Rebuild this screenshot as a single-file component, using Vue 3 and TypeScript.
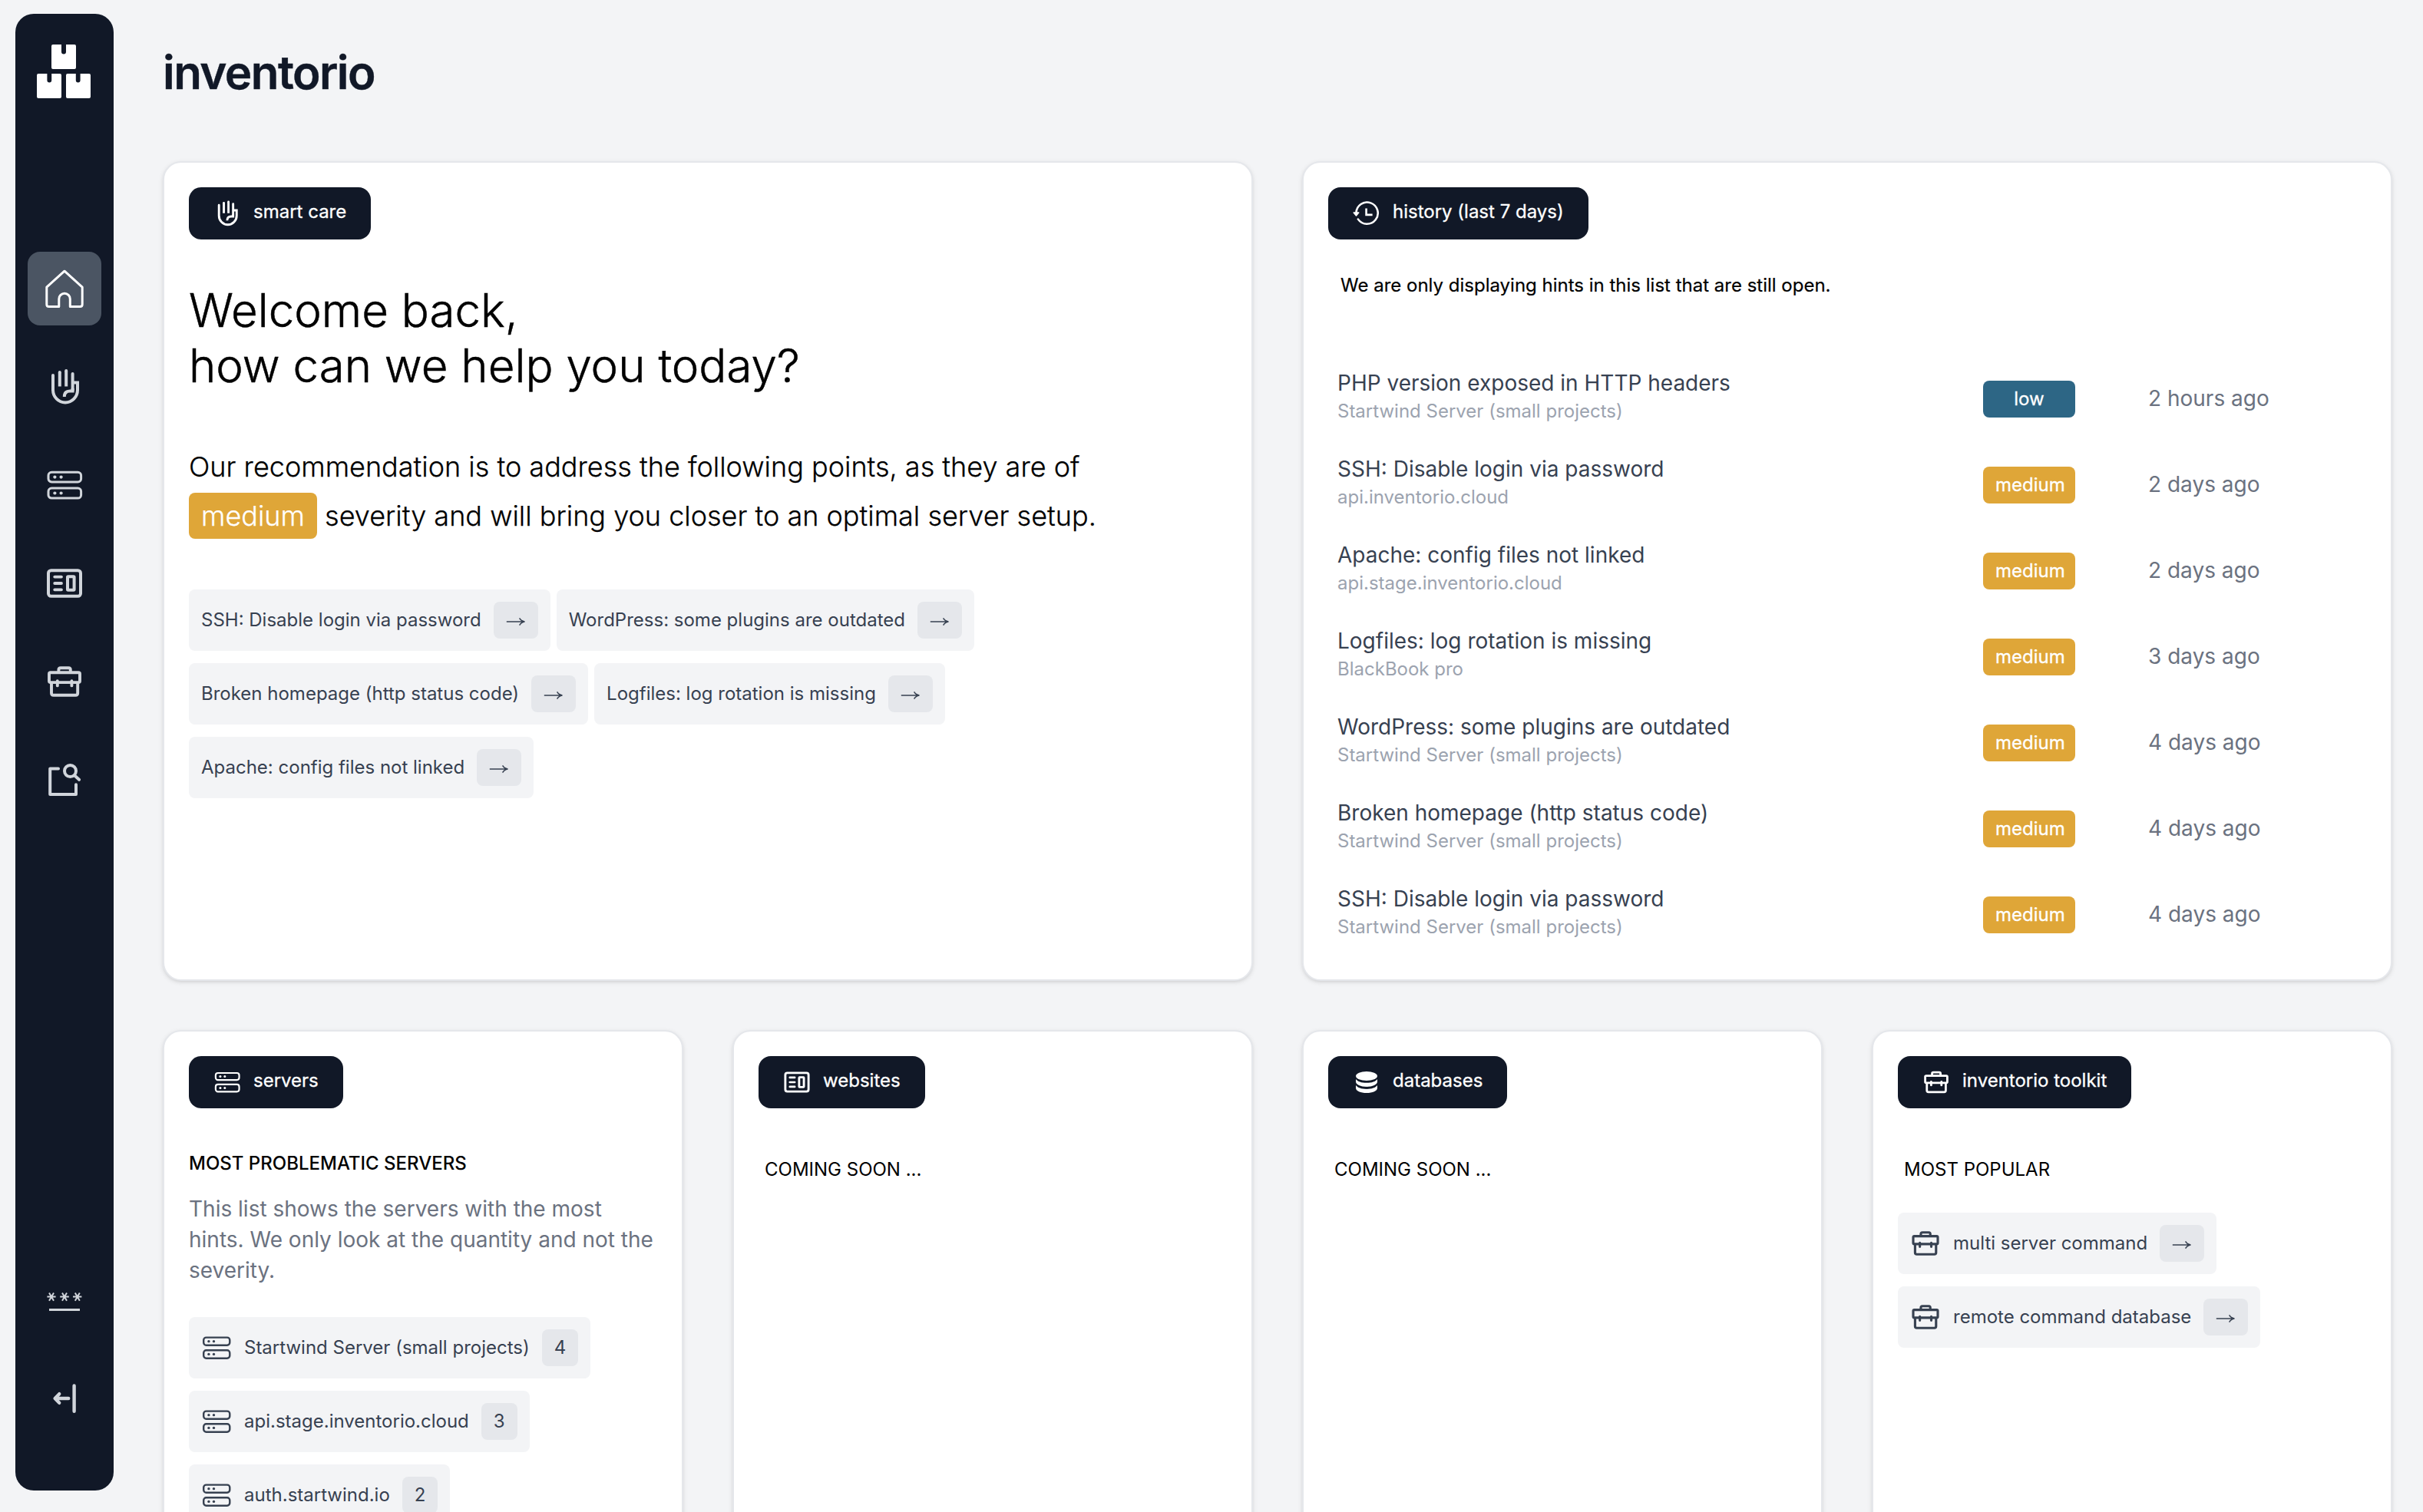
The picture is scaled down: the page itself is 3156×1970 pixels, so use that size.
<script setup lang="ts">
import { defineComponent, h } from 'vue'

type IconName = 'home' | 'hand' | 'server' | 'website' | 'toolbox' | 'report' | 'password' | 'logout' | 'history' | 'database'

// Inner markup of every icon, drawn on a 50 x 50 grid
const shapes: Record<IconName, string> = {
  home: '<path stroke-width="3" stroke-linejoin="round" d="M1.8 23.2 25 2.2 48.2 23.2V45.5Q48.2 48.5 45.2 48.5H32.3V38.5A7.2 7.2 0 0 0 17.8 38.5V48.5H4.8Q1.8 48.5 1.8 45.5Z"/>',
  hand: '<path stroke-width="4" stroke-linecap="round" d="M10 10V29A16 16.5 0 0 0 42 29V19.5H37"/><path stroke-width="4" stroke-linecap="round" d="M35.6 8V29.2"/><path stroke-width="4" stroke-linejoin="miter" d="M35.6 27V30.5H32C27.5 30.5 24.8 33 24.8 38"/><path stroke-width="4" d="M18.8 24.5V6M27.2 24.5V4"/><circle cx="18.8" cy="6" r="2" fill="currentColor" stroke="none"/><circle cx="27.2" cy="4" r="2" fill="currentColor" stroke="none"/>',
  server: '<rect x="4" y="8.3" width="42.6" height="12.6" rx="4.2" stroke-width="3"/><rect x="4" y="29.1" width="42.6" height="13" rx="4.2" stroke-width="3"/><g fill="currentColor" stroke="none"><circle cx="12.4" cy="14.6" r="2.1"/><circle cx="20.6" cy="14.6" r="2.1"/><circle cx="12.4" cy="35.5" r="2.1"/><circle cx="20.6" cy="35.5" r="2.1"/></g>',
  website: '<rect x="4" y="8.2" width="42" height="33.6" rx="3.6" stroke-width="4"/><path stroke-width="3.8" stroke-linecap="round" d="M12.2 16.6H21M12.2 25H21M12.2 33.3H21"/><rect x="29" y="16.2" width="8.6" height="17.6" rx="0.8" stroke-width="4"/>',
  toolbox: '<g stroke-width="3.9" stroke-linecap="round"><rect x="5" y="13.3" width="40" height="12.8" rx="1.8"/><path d="M8 27V40Q8 42.8 10.8 42.8H39.4Q42.2 42.8 42.2 40V27M17.4 12.6V9.8Q17.4 7.2 20 7.2H30.4Q32.8 7.2 32.8 9.8V12.6M15.8 24.2V30.4M34.4 24.2V30.4"/></g>',
  report: '<g stroke-width="4" stroke-linecap="round" stroke-linejoin="round"><path d="M17 10.4H6.2V44.1H40V31.2"/><circle cx="32.5" cy="13.5" r="7.5"/><path d="M38.3 19.6 44 24.8"/></g>',
  password: '<path stroke-width="2" d="M2.4 20.6H13.6M5 15.4 11 25.8M11 15.4 5 25.8M19.2 20.6H30.8M22 15.4 28 25.8M28 15.4 22 25.8M36 20.6H47.4M38.8 15.4 44.8 25.8M44.8 15.4 38.8 25.8"/><path stroke-width="2.8" d="M5 37.5H45"/>',
  logout: '<g stroke-width="4.4" stroke-linecap="round" stroke-linejoin="round"><path d="M37.6 8.4V41.8M30.2 25H13.2M18.2 19.2 12.6 25 18.2 30.8"/></g>',
  history: '<path stroke-width="3.6" stroke-linecap="round" d="M6.2 24A19.6 19.6 0 1 1 9.6 35.6"/><path fill="currentColor" stroke="currentColor" stroke-linejoin="round" stroke-width="2" d="M1.6 23.6H10.8L6.2 29.2Z"/><path stroke-width="3.6" d="M24.4 15.8V27.6H35.6"/>',
  database: '<g fill="currentColor" stroke="none"><ellipse cx="25" cy="13.8" rx="19.4" ry="8.4"/><path d="M5.6 19.4C8.4 23.6 15.6 26.2 25 26.2S41.6 23.6 44.4 19.4V24.2C44.4 29 36 33.2 25 33.2S5.6 29 5.6 24.2Z"/><path d="M5.6 30.6C8.4 34.8 15.6 37.4 25 37.4S41.6 34.8 44.4 30.6V35.6C44.4 40.4 36 44.4 25 44.4S5.6 40.4 5.6 35.6Z"/></g>',
}

const UiIcon = defineComponent({
  props: { name: { type: String, required: true }, size: { type: Number, required: true } },
  setup(props) {
    return () =>
      h('svg', {
        width: props.size,
        height: props.size,
        viewBox: '0 0 50 50',
        fill: 'none',
        stroke: 'currentColor',
        innerHTML: shapes[props.name as IconName],
      })
  },
})

const ArrowIcon = defineComponent({
  setup() {
    return () =>
      h('svg', {
        width: 26,
        height: 12,
        viewBox: '0 0 26 12',
        fill: 'none',
        stroke: 'currentColor',
        'stroke-width': 1.5,
        innerHTML: '<path d="M0.8 6H24M17.6 1.4C18.8 3.6 21 5.3 24.4 6C21 6.7 18.8 8.4 17.6 10.6"/>',
      })
  },
})

const nav: { icon: IconName; active?: boolean }[] = [
  { icon: 'home', active: true },
  { icon: 'hand' },
  { icon: 'server' },
  { icon: 'website' },
  { icon: 'toolbox' },
  { icon: 'report' },
]

const recommendations: string[][] = [
  ['SSH: Disable login via password', 'WordPress: some plugins are outdated'],
  ['Broken homepage (http status code)', 'Logfiles: log rotation is missing'],
  ['Apache: config files not linked'],
]

interface Hint { title: string; source: string; severity: 'low' | 'medium'; time: string }
const hints: Hint[] = [
  { title: 'PHP version exposed in HTTP headers', source: 'Startwind Server (small projects)', severity: 'low', time: '2 hours ago' },
  { title: 'SSH: Disable login via password', source: 'api.inventorio.cloud', severity: 'medium', time: '2 days ago' },
  { title: 'Apache: config files not linked', source: 'api.stage.inventorio.cloud', severity: 'medium', time: '2 days ago' },
  { title: 'Logfiles: log rotation is missing', source: 'BlackBook pro', severity: 'medium', time: '3 days ago' },
  { title: 'WordPress: some plugins are outdated', source: 'Startwind Server (small projects)', severity: 'medium', time: '4 days ago' },
  { title: 'Broken homepage (http status code)', source: 'Startwind Server (small projects)', severity: 'medium', time: '4 days ago' },
  { title: 'SSH: Disable login via password', source: 'Startwind Server (small projects)', severity: 'medium', time: '4 days ago' },
]

const servers = [
  { name: 'Startwind Server (small projects)', count: 4 },
  { name: 'api.stage.inventorio.cloud', count: 3 },
  { name: 'auth.startwind.io', count: 2 },
]

const tools = ['multi server command', 'remote command database']
</script>

<template>
  <div class="page">
    <aside class="sidebar">
      <svg class="logo" width="70" height="70" viewBox="0 0 70 70" fill="#fff">
        <path d="M21 0H32V9.4A3 3 0 0 0 38 9.4V0H49Q51 0 51 2V30Q51 32 49 32H21Q19 32 19 30V2Q19 0 21 0Z" />
        <path d="M2 38H13.4V46.6A2.9 2.9 0 0 0 19.2 46.6V38H30Q32 38 32 40V68Q32 70 30 70H2Q0 70 0 68V40Q0 38 2 38Z" />
        <path d="M40 38H50.8V46.6A2.9 2.9 0 0 0 56.6 46.6V38H68Q70 38 70 40V68Q70 70 68 70H40Q38 70 38 68V40Q38 38 40 38Z" />
      </svg>
      <nav class="nav">
        <a v-for="item in nav" :key="item.icon" class="nav-item" :class="{ active: item.active }">
          <UiIcon :name="item.icon" :size="50" />
        </a>
      </nav>
      <nav class="nav nav-bottom">
        <a class="nav-item"><UiIcon name="password" :size="50" /></a>
        <a class="nav-item"><UiIcon name="logout" :size="50" /></a>
      </nav>
    </aside>

    <main class="main">
      <h1 class="title">inventorio</h1>
      <div class="grid">
        <section class="card wide">
          <div class="tag"><UiIcon name="hand" :size="36" /><span>smart care</span></div>
          <h2 class="welcome">Welcome back,<br />how can we help you today?</h2>
          <p class="advice">
            Our recommendation is to address the following points, as they are of<br />
            <span class="mark">medium</span> severity and will bring you closer to an optimal server setup.
          </p>
          <div class="chips">
            <div v-for="(row, i) in recommendations" :key="i" class="chip-row">
              <a v-for="text in row" :key="text" class="chip">
                <span class="chip-text">{{ text }}</span><span class="chip-end arrow"><ArrowIcon /></span>
              </a>
            </div>
          </div>
        </section>

        <section class="card wide">
          <div class="tag"><UiIcon name="history" :size="36" /><span>history (last 7 days)</span></div>
          <p class="note">We are only displaying hints in this list that are still open.</p>
          <ul class="hints">
            <li v-for="(hint, i) in hints" :key="i" class="hint">
              <div class="hint-main">
                <div class="hint-title">{{ hint.title }}</div>
                <div class="hint-source">{{ hint.source }}</div>
              </div>
              <span class="pill" :class="hint.severity">{{ hint.severity }}</span>
              <span class="time">{{ hint.time }}</span>
            </li>
          </ul>
        </section>

        <section class="card">
          <div class="tag"><UiIcon name="server" :size="36" /><span>servers</span></div>
          <h3 class="problem-title">MOST PROBLEMATIC SERVERS</h3>
          <p class="problem-text">This list shows the servers with the most<br />hints. We only look at the quantity and not the<br />severity.</p>
          <div class="chips servers">
            <div v-for="server in servers" :key="server.name" class="chip-row">
              <a class="chip">
                <UiIcon name="server" :size="40" />
                <span class="chip-text">{{ server.name }}</span><span class="chip-end">{{ server.count }}</span>
              </a>
            </div>
          </div>
        </section>

        <section class="card">
          <div class="tag"><UiIcon name="website" :size="36" /><span>websites</span></div>
          <p class="label">COMING SOON ...</p>
        </section>

        <section class="card">
          <div class="tag"><UiIcon name="database" :size="36" /><span>databases</span></div>
          <p class="label">COMING SOON ...</p>
        </section>

        <section class="card">
          <div class="tag"><UiIcon name="toolbox" :size="36" /><span>inventorio toolkit</span></div>
          <p class="label">MOST POPULAR</p>
          <div class="chips">
            <div v-for="tool in tools" :key="tool" class="chip-row">
              <a class="chip">
                <UiIcon name="toolbox" :size="40" />
                <span class="chip-text">{{ tool }}</span><span class="chip-end arrow"><ArrowIcon /></span>
              </a>
            </div>
          </div>
        </section>
      </div>
    </main>
  </div>
</template>

<style>
body {
  background: #f3f4f6;
}
</style>

<style scoped>
.page {
  box-sizing: border-box;
  display: flex;
  width: 3156px;
  height: 1970px;
  padding: 18px 40px 0 20px;
  overflow: hidden;
  background: #f3f4f6;
  font-family: Inter, 'Liberation Sans', sans-serif;
  color: #000;
}
h1, h2, h3, p, ul { margin: 0; padding: 0; font-weight: inherit; }
svg { display: block; flex: none; }

.sidebar {
  box-sizing: border-box;
  display: flex;
  flex: none;
  flex-direction: column;
  width: 128px;
  height: 1924px;
  padding: 40px 16px 72px;
  border-radius: 24px;
  background: #111827;
}
.logo { margin-left: 12px; }
.nav { display: flex; flex-direction: column; gap: 32px; margin-top: 200px; }
.nav-bottom { margin-top: auto; }
.nav-item {
  display: flex;
  align-items: center;
  justify-content: center;
  height: 96px;
  border-radius: 16px;
  color: #d1d5db;
}
.nav-item.active { background: #4b5563; color: #fff; }

.main { flex: 1; display: flex; flex-direction: column; margin-left: 64px; }
.title {
  margin-top: 36px;
  font-size: 60px;
  line-height: 80px;
  font-weight: 600;
  letter-spacing: -1.55px;
  color: #111827;
  -webkit-text-stroke: 0.4px;
}
.grid {
  display: grid;
  grid-template-columns: repeat(4, 678px);
  grid-template-rows: 1068px 900px;
  gap: 64px;
  margin-top: 76px;
}
.card {
  box-sizing: border-box;
  padding: 32px;
  border: 2px solid #e5e7eb;
  border-radius: 24px;
  background: #fff;
  box-shadow: 0 2px 6px rgba(0, 0, 0, 0.1), 0 2px 4px -2px rgba(0, 0, 0, 0.1);
}
.wide { grid-column: span 2; }

.tag {
  box-sizing: border-box;
  display: flex;
  align-items: center;
  gap: 16px;
  width: fit-content;
  height: 68px;
  padding: 0 32px;
  border-radius: 16px;
  background: #111827;
  color: #fff;
  font-size: 24px;
  line-height: 32px;
  -webkit-text-stroke: 0.3px;
}
.tag span { padding-bottom: 5px; white-space: nowrap; }

.welcome { margin-top: 56px; font-size: 60px; line-height: 72px; font-weight: 300; -webkit-text-stroke: 0.5px; }
.advice { margin-top: 64px; font-size: 36px; line-height: 64px; font-weight: 300; white-space: nowrap; -webkit-text-stroke: 0.25px; }
.mark { padding: 8px 16px; border-radius: 8px; background: #dfa638; color: #fff; }
.advice + .chips { margin-top: 64px; }

.chips { display: flex; flex-direction: column; gap: 16px; margin-top: 40px; }
.chips.servers { margin-top: 41px; }
.chip-row { display: flex; gap: 8px; }
.chip {
  display: flex;
  align-items: center;
  gap: 16px;
  height: 80px;
  padding: 0 16px;
  border-radius: 8px;
  background: #f3f4f6;
  color: #374151;
  font-size: 24px;
  line-height: 32px;
}
.chip-text { white-space: nowrap; }
.chip-end { padding: 8px 16px; border-radius: 8px; background: #e5e7eb; }
.arrow { padding: 20px 16px 16px; }

.note { margin: 41px 0 0 16px; font-size: 24px; line-height: 38px; -webkit-text-stroke: 0.2px; }
.hints { margin-top: 73px; list-style: none; }
.hint {
  display: grid;
  grid-template-columns: 841px 120px 1fr;
  align-items: center;
  height: 112px;
  padding-left: 12px;
}
.hint-main { align-self: start; padding-top: 15px; }
.hint-title { font-size: 28px; line-height: 40px; color: #374151; }
.hint-source { font-size: 24px; line-height: 33px; color: #9ca3af; }
.pill {
  height: 48px;
  padding: 0 16px;
  border-radius: 8px;
  color: #fff;
  font-size: 24px;
  line-height: 47px;
  text-align: center;
  -webkit-text-stroke: 0.3px;
}
.pill.low { background: #2d6685; }
.pill.medium { background: #dfa638; }
.time { padding: 0 0 2px 95px; font-size: 28px; line-height: 40px; color: #6b7280; }

.problem-title { margin-top: 56px; font-size: 24px; line-height: 32px; font-weight: 500; }
.problem-text { margin-top: 23px; font-size: 28px; line-height: 40px; color: #6b7280; white-space: nowrap; }
.label { margin: 64px 0 0 8px; font-size: 24px; line-height: 32px; }
</style>
